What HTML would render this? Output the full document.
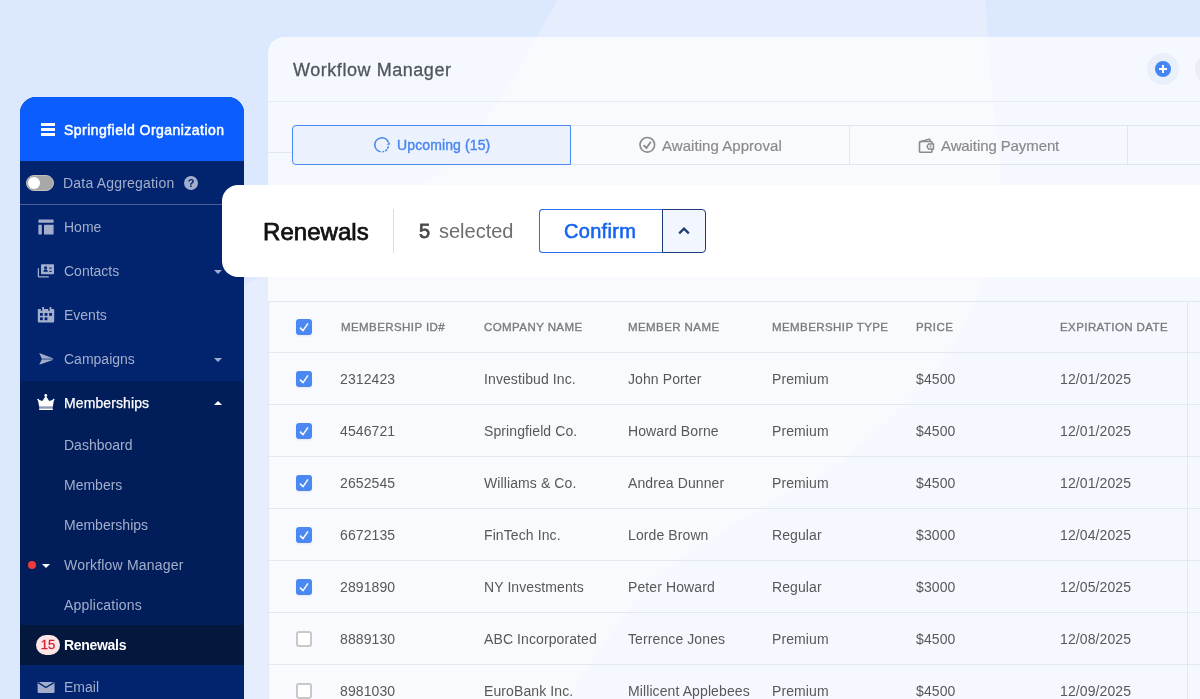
<!DOCTYPE html>
<html><head><meta charset="utf-8">
<style>
*{box-sizing:border-box;margin:0;padding:0}
html,body{width:1200px;height:699px;overflow:hidden}
body{position:relative;background:#dce8fe;font-family:"Liberation Sans",sans-serif;}
.abs{position:absolute}
.t{position:absolute;white-space:nowrap;line-height:1;-webkit-font-smoothing:antialiased;will-change:transform}
#sb{position:absolute;left:20px;top:97px;width:224px;height:620px;background:#02246e;border-radius:16px 16px 0 0;overflow:hidden}
#mp{position:absolute;left:268px;top:37px;width:960px;height:700px;background:rgba(255,255,255,0.7);border-radius:16px 0 0 0}
#card{position:absolute;left:222px;top:185px;width:1000px;height:92px;background:#fff;border-radius:16px 0 0 16px}
.bgc{position:absolute;border-radius:50%}
</style></head><body>
<svg class="abs" style="left:0;top:0" width="1200" height="699"><path d="M560,-5 C550.0,12.3 520.0,69.5 500,99 C480.0,128.5 465.0,149.8 440,172 C415.0,194.2 381.7,213.7 350,232 C318.3,250.3 275.0,267.3 250,282 C225.0,296.7 215.0,300.3 200,320 C185.0,339.7 168.3,335.0 160,400 C151.7,465.0 151.7,658.3 150,710 L560,710 C575.0,689.2 618.3,617.5 650,585 C681.7,552.5 716.7,536.7 750,515 C783.3,493.3 816.7,482.5 850,455 C883.3,427.5 926.3,384.2 950,350 C973.7,315.8 983.7,278.3 992,250 C1000.3,221.7 1000.0,206.7 1000,180 C1000.0,153.3 994.5,120.8 992,90 C989.5,59.2 986.2,10.8 985,-5 Z" fill="#e6edfc"/></svg>
<div id="sb"><div style="position:absolute;left:0;top:0;width:224px;height:64px;background:#0b5efd"></div><div style="position:absolute;left:0;top:284px;width:224px;height:284px;background:#011e5b"></div><div style="position:absolute;left:0;top:528px;width:224px;height:40px;background:#04173d"></div><div style="position:absolute;left:0;top:107px;width:224px;height:1px;background:#4a5f92"></div></div><div class="abs" style="left:41px;top:123px;width:14px;height:3px;background:#fff"></div><div class="abs" style="left:41px;top:128px;width:14px;height:3px;background:#fff"></div><div class="abs" style="left:41px;top:133px;width:14px;height:3px;background:#fff"></div><div class="t" style="left:64px;top:122.55px;font-size:14px;color:#fff;font-weight:normal;letter-spacing:0.46px;-webkit-text-stroke:0.5px #fff;">Springfield Organization</div>
<div class="abs" style="left:26px;top:175px;width:28px;height:16px;border-radius:8px;background:#a8a8a8;border:1px solid #c4c0b8"></div><div class="abs" style="left:28px;top:176.8px;width:12.2px;height:12.2px;border-radius:50%;background:#fff"></div><div class="t" style="left:62.5px;top:176.15px;font-size:14px;color:#a2aecb;font-weight:normal;letter-spacing:0.2px;">Data Aggregation</div>
<div class="abs" style="left:184px;top:176px;width:14px;height:14px;border-radius:50%;background:#a2aecb;color:#02246e;font-size:11px;font-weight:bold;line-height:14.5px;text-align:center;will-change:transform">?</div><div class="t" style="left:63.8px;top:220.35px;font-size:14px;color:#a2aecb;font-weight:normal;letter-spacing:0px;">Home</div>
<div class="t" style="left:63.8px;top:264.35px;font-size:14px;color:#a2aecb;font-weight:normal;letter-spacing:0px;">Contacts</div>
<div class="t" style="left:63.8px;top:308.35px;font-size:14px;color:#a2aecb;font-weight:normal;letter-spacing:0px;">Events</div>
<div class="t" style="left:63.8px;top:352.35px;font-size:14px;color:#a2aecb;font-weight:normal;letter-spacing:0px;">Campaigns</div>
<div class="t" style="left:63.8px;top:396.35px;font-size:14px;color:#fff;font-weight:normal;letter-spacing:0.1px;-webkit-text-stroke:0.25px #fff;">Memberships</div>
<div class="t" style="left:63.8px;top:438.35px;font-size:14px;color:#a2aecb;font-weight:normal;letter-spacing:0px;">Dashboard</div>
<div class="t" style="left:63.8px;top:478.35px;font-size:14px;color:#a2aecb;font-weight:normal;letter-spacing:0px;">Members</div>
<div class="t" style="left:63.8px;top:518.35px;font-size:14px;color:#a2aecb;font-weight:normal;letter-spacing:0px;">Memberships</div>
<div class="t" style="left:63.8px;top:558.35px;font-size:14px;color:#a2aecb;font-weight:normal;letter-spacing:0.2px;">Workflow Manager</div>
<div class="t" style="left:63.8px;top:598.35px;font-size:14px;color:#a2aecb;font-weight:normal;letter-spacing:0.2px;">Applications</div>
<div class="t" style="left:63.8px;top:638.35px;font-size:14px;color:#fff;font-weight:bold;letter-spacing:-0.3px;">Renewals</div>
<div class="t" style="left:63.8px;top:680.35px;font-size:14px;color:#a2aecb;font-weight:normal;letter-spacing:0px;">Email</div>
<div class="abs" style="left:214px;top:269.5px;width:0;height:0;border-left:4.0px solid transparent;border-right:4.0px solid transparent;border-top:4px solid #a2aecb"></div>
<div class="abs" style="left:214px;top:357.5px;width:0;height:0;border-left:4.0px solid transparent;border-right:4.0px solid transparent;border-top:4px solid #a2aecb"></div>
<div class="abs" style="left:214px;top:401px;width:0;height:0;border-left:4.0px solid transparent;border-right:4.0px solid transparent;border-bottom:4px solid #fff"></div>
<div class="abs" style="left:42px;top:563.5px;width:0;height:0;border-left:4.0px solid transparent;border-right:4.0px solid transparent;border-top:4px solid #fff"></div>
<div class="abs" style="left:28px;top:561px;width:8px;height:8px;border-radius:50%;background:#ef3b3b"></div><div class="abs" style="left:36px;top:635px;width:24px;height:20px;border-radius:10px;background:#fde6e6;color:#cf2433;font-size:13px;line-height:20px;text-align:center;-webkit-text-stroke:0.3px #cf2433;will-change:transform">15</div><svg class="abs" style="left:32px;top:212px" width="28" height="28" viewBox="0 0 28 28"><rect x="6.4" y="7.6" width="15.2" height="3.2" rx="0.4" fill="#a2aecb"/><rect x="6.4" y="12.8" width="3.4" height="9.6" rx="0.4" fill="#a2aecb"/><rect x="12" y="12.8" width="9.6" height="9.6" rx="0.4" fill="#a2aecb"/></svg>
<svg class="abs" style="left:32px;top:257px" width="28" height="28" viewBox="0 0 28 28"><path d="M6.4 11.2 V19.2 Q6.4 19.8 7 19.8 H16.8" stroke="#a2aecb" stroke-width="1.3" fill="none"/><rect x="9" y="7.2" width="13" height="10" rx="0.8" fill="#a2aecb"/><circle cx="13.6" cy="10.8" r="1.5" fill="#02246e"/><path d="M11.2 14.8 L12.3 12.6 H14.9 L16 14.8 Z" fill="#02246e"/><rect x="17.2" y="10.6" width="2.6" height="1" fill="#02246e"/><rect x="17.2" y="13.8" width="2.6" height="1" fill="#02246e"/></svg>
<svg class="abs" style="left:32px;top:301px" width="28" height="28" viewBox="0 0 28 28"><rect x="5.8" y="8" width="16.4" height="13.4" rx="0.8" fill="#a2aecb"/><rect x="10.2" y="6" width="1.8" height="3.8" fill="#a2aecb"/><rect x="17.6" y="6" width="1.8" height="3.8" fill="#a2aecb"/><rect x="8.8" y="8" width="1.4" height="1.8" fill="#02246e"/><rect x="16.2" y="8" width="1.4" height="1.8" fill="#02246e"/><rect x="8" y="12" width="2.8" height="2.8" fill="#02246e"/><rect x="12.6" y="12" width="2.8" height="2.8" fill="#02246e"/><rect x="17.2" y="12" width="2.8" height="2.8" fill="#02246e"/><rect x="8" y="16.4" width="2.8" height="2.8" fill="#02246e"/><rect x="12.6" y="16.4" width="2.8" height="2.8" fill="#02246e"/></svg>
<svg class="abs" style="left:32px;top:345px" width="28" height="28" viewBox="0 0 28 28"><path d="M7.2 8 L20.8 13.2 L20.8 15 L7.2 19.8 L10 14.1 Z" fill="#a2aecb"/><rect x="10.2" y="13.3" width="10.6" height="1.6" fill="#5b70a3"/></svg>
<svg class="abs" style="left:32px;top:388px" width="28" height="28" viewBox="0 0 28 28"><circle cx="13.8" cy="7.4" r="1.4" fill="#fff"/><circle cx="6.2" cy="11.6" r="0.9" fill="#fff"/><circle cx="21.6" cy="11.6" r="0.9" fill="#fff"/><path d="M5.8 11.4 L10.4 13 L13.8 7.8 L17.2 13 L22 11.4 L20.8 18.8 L7.2 18.8 Z" fill="#fff"/><rect x="7.2" y="18.8" width="13.6" height="1.6" fill="#8d99b8"/><rect x="7.2" y="20.4" width="13.6" height="1.6" fill="#fff"/></svg>
<svg class="abs" style="left:32px;top:673px" width="28" height="26" viewBox="0 0 28 26"><rect x="5.6" y="8.9" width="16.9" height="11" rx="1" fill="#a2aecb"/><path d="M6.2 9.6 L13.9 14.6 L21.8 9.6" stroke="#02246e" stroke-width="1.3" fill="none"/></svg>
<div id="mp"></div><div class="abs" style="left:268px;top:101px;width:932px;height:1px;background:#e6eaf2"></div><div class="t" style="left:292.5px;top:60.56px;font-size:18px;color:#50545c;font-weight:normal;letter-spacing:0.55px;-webkit-text-stroke:0.3px #50545c;">Workflow Manager</div>
<div class="abs" style="left:1147px;top:53px;width:32px;height:32px;border-radius:50%;background:#e9f0fc"></div><div class="abs" style="left:1155px;top:61px;width:16px;height:16px;border-radius:50%;background:#4386f4"></div><div class="abs" style="left:1159px;top:68px;width:8px;height:2px;background:#fff"></div><div class="abs" style="left:1162px;top:65px;width:2px;height:8px;background:#fff"></div><div class="abs" style="left:1195px;top:53px;width:32px;height:32px;border-radius:50%;background:#eceef2"></div><div class="abs" style="left:268px;top:152px;width:24px;height:1px;background:#e2e6ee"></div><div class="abs" style="left:570px;top:125px;width:630px;height:40px;border-top:1px solid #e2e6ee;border-bottom:1px solid #e2e6ee"></div><div class="abs" style="left:849px;top:125px;width:1px;height:40px;background:#e2e6ee"></div><div class="abs" style="left:1127px;top:125px;width:1px;height:40px;background:#e2e6ee"></div><div class="abs" style="left:292px;top:125px;width:279px;height:40px;border:1px solid #4d89f3;border-radius:4px 0 0 4px;background:#ecf2fd"></div><svg class="abs" style="left:370px;top:133px" width="24" height="24" viewBox="0 0 24 24"><path d="M18.4 9.5 A7 7 0 1 0 10.6 18.75" stroke="#4a86f0" stroke-width="1.6" fill="none"/><path d="M13 18.8 L13.6 18.6 M15.7 17.6 L16.6 16.9 M17.7 15.1 L18.3 13.7" stroke="#4a86f0" stroke-width="1.5" stroke-linecap="round" fill="none"/><path d="M19.9 8.9 L19.9 11.7 L16.5 11.7 Z" fill="#4a86f0"/></svg>
<div class="t" style="left:397px;top:137.65px;font-size:14px;color:#4a86f0;font-weight:normal;letter-spacing:0.12px;-webkit-text-stroke:0.4px #4a86f0;">Upcoming (15)</div>
<svg class="abs" style="left:638px;top:136px" width="18" height="18" viewBox="0 0 18 18">
<circle cx="9.3" cy="8.8" r="7.3" stroke="#8a8a8a" stroke-width="1.6" fill="none"/>
<path d="M5.6 9.2 L8.4 12 L12.8 5.8" stroke="#8a8a8a" stroke-width="1.8" fill="none"/></svg><div class="t" style="left:662px;top:137.60px;font-size:15px;color:#8a8a8a;font-weight:normal;letter-spacing:0.05px;-webkit-text-stroke:0.2px #8a8a8a;">Awaiting Approval</div>
<svg class="abs" style="left:918px;top:138px" width="17" height="15" viewBox="0 0 17 15">
<path d="M1.5 4 L11.5 1 L12.5 3" stroke="#8a8a8a" stroke-width="1.4" fill="none"/>
<rect x="1.5" y="3.5" width="12.5" height="10.8" rx="1" stroke="#8a8a8a" stroke-width="1.6" fill="none"/>
<path d="M15.5 6 H10.5 L9 8.5 L10.5 11 H15.5 Z" stroke="#8a8a8a" stroke-width="1.4" fill="#f6f8fe"/>
<circle cx="12.5" cy="8.5" r="0.9" fill="#8a8a8a"/></svg><div class="t" style="left:941px;top:137.60px;font-size:15px;color:#8a8a8a;font-weight:normal;letter-spacing:-0.1px;-webkit-text-stroke:0.2px #8a8a8a;">Awaiting Payment</div>
<div class="abs" style="left:268px;top:301px;width:932px;height:1px;background:#e3e7f0"></div><div class="abs" style="left:268px;top:352px;width:932px;height:1px;background:#e3e7f0"></div><div class="abs" style="left:268px;top:404px;width:932px;height:1px;background:#e3e7f0"></div><div class="abs" style="left:268px;top:456px;width:932px;height:1px;background:#e3e7f0"></div><div class="abs" style="left:268px;top:508px;width:932px;height:1px;background:#e3e7f0"></div><div class="abs" style="left:268px;top:560px;width:932px;height:1px;background:#e3e7f0"></div><div class="abs" style="left:268px;top:612px;width:932px;height:1px;background:#e3e7f0"></div><div class="abs" style="left:268px;top:664px;width:932px;height:1px;background:#e3e7f0"></div><div class="abs" style="left:268px;top:301px;width:1px;height:400px;background:#e3e7f0"></div><div class="abs" style="left:1187px;top:301px;width:1px;height:400px;background:#e3e7f0"></div><div class="t" style="left:340.5px;top:321.57px;font-size:11.5px;color:#7b7b7b;font-weight:normal;letter-spacing:0.42px;-webkit-text-stroke:0.35px #7b7b7b;">MEMBERSHIP ID#</div>
<div class="t" style="left:484.25px;top:321.57px;font-size:11.5px;color:#7b7b7b;font-weight:normal;letter-spacing:0.42px;-webkit-text-stroke:0.35px #7b7b7b;">COMPANY NAME</div>
<div class="t" style="left:628.25px;top:321.57px;font-size:11.5px;color:#7b7b7b;font-weight:normal;letter-spacing:0.42px;-webkit-text-stroke:0.35px #7b7b7b;">MEMBER NAME</div>
<div class="t" style="left:771.75px;top:321.57px;font-size:11.5px;color:#7b7b7b;font-weight:normal;letter-spacing:0.42px;-webkit-text-stroke:0.35px #7b7b7b;">MEMBERSHIP TYPE</div>
<div class="t" style="left:915.75px;top:321.57px;font-size:11.5px;color:#7b7b7b;font-weight:normal;letter-spacing:0.42px;-webkit-text-stroke:0.35px #7b7b7b;">PRICE</div>
<div class="t" style="left:1059.5px;top:321.57px;font-size:11.5px;color:#7b7b7b;font-weight:normal;letter-spacing:0.42px;-webkit-text-stroke:0.35px #7b7b7b;">EXPIRATION DATE</div>
<div class="abs" style="left:296px;top:319px;width:16px;height:16px;border-radius:3px;background:#4a88f4;box-shadow:0 1px 2px rgba(0,0,0,0.08)"><svg width="16" height="16" viewBox="0 0 16 16" style="position:absolute;left:0;top:0"><path d="M4 8.6 L7 11.6 L12 4.4" stroke="#fff" stroke-width="1.5" fill="none"/></svg></div>
<div class="abs" style="left:296px;top:371px;width:16px;height:16px;border-radius:3px;background:#4a88f4;box-shadow:0 1px 2px rgba(0,0,0,0.08)"><svg width="16" height="16" viewBox="0 0 16 16" style="position:absolute;left:0;top:0"><path d="M4 8.6 L7 11.6 L12 4.4" stroke="#fff" stroke-width="1.5" fill="none"/></svg></div>
<div class="t" style="left:340px;top:372.40px;font-size:14px;color:#585858;font-weight:normal;letter-spacing:0.1px;">2312423</div>
<div class="t" style="left:484.25px;top:372.40px;font-size:14px;color:#585858;font-weight:normal;letter-spacing:0.1px;">Investibud Inc.</div>
<div class="t" style="left:628.25px;top:372.40px;font-size:14px;color:#585858;font-weight:normal;letter-spacing:0.1px;">John Porter</div>
<div class="t" style="left:771.75px;top:372.40px;font-size:14px;color:#585858;font-weight:normal;letter-spacing:0.1px;">Premium</div>
<div class="t" style="left:915.75px;top:372.40px;font-size:14px;color:#585858;font-weight:normal;letter-spacing:0.1px;">$4500</div>
<div class="t" style="left:1059.5px;top:372.40px;font-size:14px;color:#585858;font-weight:normal;letter-spacing:0.1px;">12/01/2025</div>
<div class="abs" style="left:296px;top:423px;width:16px;height:16px;border-radius:3px;background:#4a88f4;box-shadow:0 1px 2px rgba(0,0,0,0.08)"><svg width="16" height="16" viewBox="0 0 16 16" style="position:absolute;left:0;top:0"><path d="M4 8.6 L7 11.6 L12 4.4" stroke="#fff" stroke-width="1.5" fill="none"/></svg></div>
<div class="t" style="left:340px;top:424.40px;font-size:14px;color:#585858;font-weight:normal;letter-spacing:0.1px;">4546721</div>
<div class="t" style="left:484.25px;top:424.40px;font-size:14px;color:#585858;font-weight:normal;letter-spacing:0.1px;">Springfield Co.</div>
<div class="t" style="left:628.25px;top:424.40px;font-size:14px;color:#585858;font-weight:normal;letter-spacing:0.1px;">Howard Borne</div>
<div class="t" style="left:771.75px;top:424.40px;font-size:14px;color:#585858;font-weight:normal;letter-spacing:0.1px;">Premium</div>
<div class="t" style="left:915.75px;top:424.40px;font-size:14px;color:#585858;font-weight:normal;letter-spacing:0.1px;">$4500</div>
<div class="t" style="left:1059.5px;top:424.40px;font-size:14px;color:#585858;font-weight:normal;letter-spacing:0.1px;">12/01/2025</div>
<div class="abs" style="left:296px;top:475px;width:16px;height:16px;border-radius:3px;background:#4a88f4;box-shadow:0 1px 2px rgba(0,0,0,0.08)"><svg width="16" height="16" viewBox="0 0 16 16" style="position:absolute;left:0;top:0"><path d="M4 8.6 L7 11.6 L12 4.4" stroke="#fff" stroke-width="1.5" fill="none"/></svg></div>
<div class="t" style="left:340px;top:476.40px;font-size:14px;color:#585858;font-weight:normal;letter-spacing:0.1px;">2652545</div>
<div class="t" style="left:484.25px;top:476.40px;font-size:14px;color:#585858;font-weight:normal;letter-spacing:0.1px;">Williams &amp; Co.</div>
<div class="t" style="left:628.25px;top:476.40px;font-size:14px;color:#585858;font-weight:normal;letter-spacing:0.1px;">Andrea Dunner</div>
<div class="t" style="left:771.75px;top:476.40px;font-size:14px;color:#585858;font-weight:normal;letter-spacing:0.1px;">Premium</div>
<div class="t" style="left:915.75px;top:476.40px;font-size:14px;color:#585858;font-weight:normal;letter-spacing:0.1px;">$4500</div>
<div class="t" style="left:1059.5px;top:476.40px;font-size:14px;color:#585858;font-weight:normal;letter-spacing:0.1px;">12/01/2025</div>
<div class="abs" style="left:296px;top:527px;width:16px;height:16px;border-radius:3px;background:#4a88f4;box-shadow:0 1px 2px rgba(0,0,0,0.08)"><svg width="16" height="16" viewBox="0 0 16 16" style="position:absolute;left:0;top:0"><path d="M4 8.6 L7 11.6 L12 4.4" stroke="#fff" stroke-width="1.5" fill="none"/></svg></div>
<div class="t" style="left:340px;top:528.40px;font-size:14px;color:#585858;font-weight:normal;letter-spacing:0.1px;">6672135</div>
<div class="t" style="left:484.25px;top:528.40px;font-size:14px;color:#585858;font-weight:normal;letter-spacing:0.1px;">FinTech Inc.</div>
<div class="t" style="left:628.25px;top:528.40px;font-size:14px;color:#585858;font-weight:normal;letter-spacing:0.1px;">Lorde Brown</div>
<div class="t" style="left:771.75px;top:528.40px;font-size:14px;color:#585858;font-weight:normal;letter-spacing:0.1px;">Regular</div>
<div class="t" style="left:915.75px;top:528.40px;font-size:14px;color:#585858;font-weight:normal;letter-spacing:0.1px;">$3000</div>
<div class="t" style="left:1059.5px;top:528.40px;font-size:14px;color:#585858;font-weight:normal;letter-spacing:0.1px;">12/04/2025</div>
<div class="abs" style="left:296px;top:579px;width:16px;height:16px;border-radius:3px;background:#4a88f4;box-shadow:0 1px 2px rgba(0,0,0,0.08)"><svg width="16" height="16" viewBox="0 0 16 16" style="position:absolute;left:0;top:0"><path d="M4 8.6 L7 11.6 L12 4.4" stroke="#fff" stroke-width="1.5" fill="none"/></svg></div>
<div class="t" style="left:340px;top:580.40px;font-size:14px;color:#585858;font-weight:normal;letter-spacing:0.1px;">2891890</div>
<div class="t" style="left:484.25px;top:580.40px;font-size:14px;color:#585858;font-weight:normal;letter-spacing:0.1px;">NY Investments</div>
<div class="t" style="left:628.25px;top:580.40px;font-size:14px;color:#585858;font-weight:normal;letter-spacing:0.1px;">Peter Howard</div>
<div class="t" style="left:771.75px;top:580.40px;font-size:14px;color:#585858;font-weight:normal;letter-spacing:0.1px;">Regular</div>
<div class="t" style="left:915.75px;top:580.40px;font-size:14px;color:#585858;font-weight:normal;letter-spacing:0.1px;">$3000</div>
<div class="t" style="left:1059.5px;top:580.40px;font-size:14px;color:#585858;font-weight:normal;letter-spacing:0.1px;">12/05/2025</div>
<div class="abs" style="left:296px;top:631px;width:16px;height:16px;border-radius:3px;background:#fff;border:2px solid #c8c8c8"></div>
<div class="t" style="left:340px;top:632.40px;font-size:14px;color:#585858;font-weight:normal;letter-spacing:0.1px;">8889130</div>
<div class="t" style="left:484.25px;top:632.40px;font-size:14px;color:#585858;font-weight:normal;letter-spacing:0.1px;">ABC Incorporated</div>
<div class="t" style="left:628.25px;top:632.40px;font-size:14px;color:#585858;font-weight:normal;letter-spacing:0.1px;">Terrence Jones</div>
<div class="t" style="left:771.75px;top:632.40px;font-size:14px;color:#585858;font-weight:normal;letter-spacing:0.1px;">Premium</div>
<div class="t" style="left:915.75px;top:632.40px;font-size:14px;color:#585858;font-weight:normal;letter-spacing:0.1px;">$4500</div>
<div class="t" style="left:1059.5px;top:632.40px;font-size:14px;color:#585858;font-weight:normal;letter-spacing:0.1px;">12/08/2025</div>
<div class="abs" style="left:296px;top:683px;width:16px;height:16px;border-radius:3px;background:#fff;border:2px solid #c8c8c8"></div>
<div class="t" style="left:340px;top:684.40px;font-size:14px;color:#585858;font-weight:normal;letter-spacing:0.1px;">8981030</div>
<div class="t" style="left:484.25px;top:684.40px;font-size:14px;color:#585858;font-weight:normal;letter-spacing:0.1px;">EuroBank Inc.</div>
<div class="t" style="left:628.25px;top:684.40px;font-size:14px;color:#585858;font-weight:normal;letter-spacing:0.1px;">Millicent Applebees</div>
<div class="t" style="left:771.75px;top:684.40px;font-size:14px;color:#585858;font-weight:normal;letter-spacing:0.1px;">Premium</div>
<div class="t" style="left:915.75px;top:684.40px;font-size:14px;color:#585858;font-weight:normal;letter-spacing:0.1px;">$4500</div>
<div class="t" style="left:1059.5px;top:684.40px;font-size:14px;color:#585858;font-weight:normal;letter-spacing:0.1px;">12/09/2025</div>
<div id="card"></div><div class="t" style="left:263px;top:220.08px;font-size:24px;color:#111111;font-weight:normal;letter-spacing:0.05px;-webkit-text-stroke:0.75px #111111;">Renewals</div>
<div class="abs" style="left:393px;top:209px;width:1px;height:44px;background:#dcdcdc"></div><div class="t" style="left:418.5px;top:220.57px;font-size:20px;color:#4a4a4a;font-weight:normal;letter-spacing:0px;-webkit-text-stroke:0.8px #4a4a4a;">5</div>
<div class="t" style="left:438.5px;top:220.57px;font-size:20px;color:#6e6e6e;font-weight:normal;letter-spacing:0px;">selected</div>
<div class="abs" style="left:539px;top:209px;width:167px;height:44px;border:1px solid #1d3b77;border-radius:4px;background:#f2f6fe"></div><div class="abs" style="left:539px;top:209px;width:124px;height:44px;border:1px solid #2a6ff0;border-right:1px solid #1d3b77;border-radius:4px 0 0 4px;background:#fff"></div><div class="t" style="left:564px;top:221.07px;font-size:20px;color:#1463f0;font-weight:normal;letter-spacing:0.3px;-webkit-text-stroke:0.55px #1463f0;">Confirm</div>
<svg class="abs" style="left:677px;top:224px" width="14" height="14" viewBox="0 0 14 14">
<path d="M2.2 9.4 L7 4.6 L11.8 9.4" stroke="#1d3b77" stroke-width="2.2" fill="none"/></svg>
</body></html>
